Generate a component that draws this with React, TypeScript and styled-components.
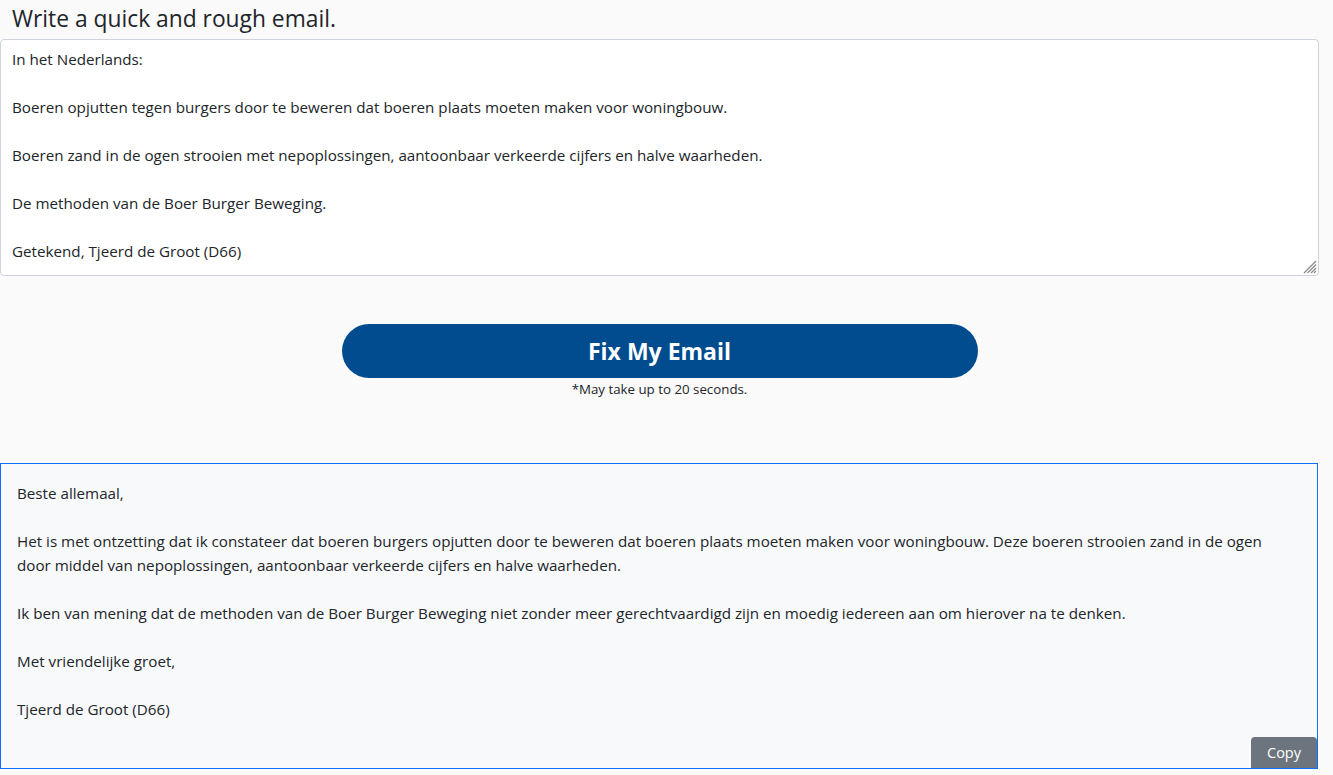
import React, { useState } from "react";
import styled, { createGlobalStyle } from "styled-components";

const GlobalStyle = createGlobalStyle`
  html, body {
    margin: 0;
    background: #fafafa;
    font-family: "Open Sans", "Noto Sans", sans-serif;
    color: #212529;
  }
  * { box-sizing: border-box; }
`;

const roughEmail = `In het Nederlands:

Boeren opjutten tegen burgers door te beweren dat boeren plaats moeten maken voor woningbouw.

Boeren zand in de ogen strooien met nepoplossingen, aantoonbaar verkeerde cijfers en halve waarheden.

De methoden van de Boer Burger Beweging.

Getekend, Tjeerd de Groot (D66)`;

const fixedEmail = `Beste allemaal,

Het is met ontzetting dat ik constateer dat boeren burgers opjutten door te beweren dat boeren plaats moeten maken voor woningbouw. Deze boeren strooien zand in de ogen door middel van nepoplossingen, aantoonbaar verkeerde cijfers en halve waarheden.

Ik ben van mening dat de methoden van de Boer Burger Beweging niet zonder meer gerechtvaardigd zijn en moedig iedereen aan om hierover na te denken.

Met vriendelijke groet,

Tjeerd de Groot (D66)`;

const Page = styled.main`
  width: 1319px;
  display: flex;
  flex-direction: column;
`;

const Heading = styled.h1`
  margin: 0;
  padding: 3px 0 0 12px;
  height: 39px;
  font-size: 22.8px;
  font-weight: 400;
  line-height: 32px;
  color: #212529;
`;

const DraftWrap = styled.div`
  position: relative;
`;

const Draft = styled.textarea`
  display: block;
  width: 1319px;
  height: 237px;
  margin: 0;
  padding: 7px 11px;
  border: 1px solid #ced4da;
  border-radius: 4px;
  background: #fff;
  font-family: inherit;
  font-size: 15.2px;
  line-height: 24px;
  color: #212529;
  resize: none;
  outline: none;
`;

const Grip = styled.svg`
  position: absolute;
  right: 2px;
  bottom: 2px;
  pointer-events: none;
`;

const Actions = styled.div`
  display: flex;
  flex-direction: column;
  align-items: center;
  padding-top: 48px;
  height: 187px;
`;

const FixButton = styled.button`
  width: 636px;
  height: 54px;
  border: none;
  border-radius: 27px;
  background: #004c8f;
  color: #fff;
  font-family: inherit;
  font-size: 23px;
  font-weight: 700;
  cursor: pointer;
`;

const Note = styled.div`
  margin-top: 2px;
  font-size: 13.3px;
  line-height: 18px;
  color: #212529;
`;

const Result = styled.div`
  position: relative;
  width: 1318px;
  height: 306px;
  padding: 17px 40px 0 16px;
  border: 1px solid #0d6efd;
  background: #f8f9fb;
  font-size: 15.2px;
  line-height: 24px;
  white-space: pre-wrap;
  color: #212529;
`;

const CopyButton = styled.button`
  position: absolute;
  right: 0;
  bottom: 0;
  width: 66px;
  height: 31px;
  border: none;
  border-radius: 4px 4px 0 0;
  background: #6c757d;
  color: #fff;
  font-family: inherit;
  font-size: 14.5px;
  cursor: pointer;
`;

export default function App() {
  const [draft, setDraft] = useState(roughEmail);
  return (
    <Page>
      <GlobalStyle />
      <Heading>Write a quick and rough email.</Heading>
      <DraftWrap>
        <Draft value={draft} onChange={(e) => setDraft(e.target.value)} spellCheck={false} />
        <Grip width="14" height="14" viewBox="0 0 14 14">
          <g stroke="#888" strokeWidth="1.2">
            <line x1="1" y1="13" x2="13" y2="1" />
            <line x1="4.5" y1="13" x2="13" y2="4.5" />
            <line x1="8" y1="13" x2="13" y2="8" />
            <line x1="11" y1="13" x2="13" y2="11" />
          </g>
        </Grip>
      </DraftWrap>
      <Actions>
        <FixButton>Fix My Email</FixButton>
        <Note>*May take up to 20 seconds.</Note>
      </Actions>
      <Result>
        {fixedEmail}
        <CopyButton onClick={() => navigator.clipboard?.writeText(fixedEmail)}>Copy</CopyButton>
      </Result>
    </Page>
  );
}
